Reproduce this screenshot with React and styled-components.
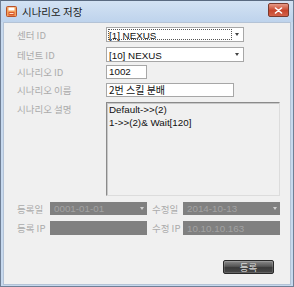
import React from "react";
import styled, { createGlobalStyle } from "styled-components";

const GlobalStyle = createGlobalStyle`
  html, body {
    margin: 0;
    padding: 0;
    background: #ffffff;
  }
  body {
    font-family: "Liberation Sans", "Noto Sans CJK KR", sans-serif;
  }
`;

const KR = `"Noto Sans CJK KR", "Liberation Sans", sans-serif`;
const LATIN = `"Liberation Sans", "Noto Sans CJK KR", sans-serif`;

/* Window frame */
const Window = styled.div`
  width: 294px;
  height: 287px;
  box-sizing: border-box;
  display: flex;
  flex-direction: column;
  border: 1px solid #6f7f95;
  border-top-color: #5a6a80;
  background: #c7d9ee;
  overflow: hidden;
`;

const TitleBar = styled.div`
  height: 21px;
  flex: none;
  display: flex;
  align-items: center;
  padding: 0 4px 0 5px;
  background: linear-gradient(#d3e2f3, #bed3ec);
`;

const Title = styled.span`
  flex: 1;
  margin-left: 5px;
  font-family: ${KR};
  font-size: 10.5px;
  color: #1a1a1a;
`;

const CloseButton = styled.div`
  width: 19px;
  height: 12px;
  margin-top: -3px;
  border: 1px solid #7a3a2e;
  border-radius: 2px;
  background: linear-gradient(#e69a86, #c7452c 55%, #d4634a);
  display: flex;
  align-items: center;
  justify-content: center;
`;

const Body = styled.div`
  flex: 1;
  margin: 0 2px 1px 2px;
  border: 1px solid #b4c3d6;
  background: #f0f0f0;
  padding: 3px 0 0 13px;
  display: flex;
  flex-direction: column;
`;

/* Form rows */
const Row = styled.div`
  display: grid;
  grid-template-columns: 89px 1fr;
  align-items: ${(p) => (p.$top ? "start" : "center")};
  margin-top: ${(p) => p.$mt}px;
`;

const Label = styled.span`
  font-family: ${KR};
  font-size: 9.5px;
  color: #ababab;
  line-height: 12px;
  white-space: nowrap;
  padding-top: ${(p) => p.$pt || 0}px;
  padding-left: ${(p) => p.$pl || 0}px;
`;

const Combo = styled.div`
  width: ${(p) => p.$w}px;
  height: 15px;
  box-sizing: border-box;
  border: 1px solid #a7a7a7;
  background: #fff;
  display: flex;
  align-items: center;
  padding: 1px;
`;

const ComboText = styled.div`
  flex: 1;
  height: 100%;
  box-sizing: border-box;
  border: 1px ${(p) => (p.$focus ? "dotted #555" : "solid transparent")};
  font-family: ${LATIN};
  font-size: 9.8px;
  line-height: 11px;
  color: #111;
  white-space: nowrap;
`;

const Arrow = styled.div`
  width: 10px;
  display: flex;
  justify-content: center;
  &::after {
    content: "";
    border-left: 2.5px solid transparent;
    border-right: 2.5px solid transparent;
    border-top: 3px solid ${(p) => p.$color || "#444"};
  }
`;

const Input = styled.div`
  width: ${(p) => p.$w}px;
  height: 14px;
  box-sizing: border-box;
  border: 1px solid #a7a7a7;
  background: #fff;
  font-family: ${(p) => (p.$kr ? KR : LATIN)};
  font-size: ${(p) => (p.$kr ? 10 : 9.8)}px;
  line-height: 12px;
  padding-left: 2px;
  color: #111;
  white-space: nowrap;
`;

const TextArea = styled.div`
  width: 174px;
  height: 94px;
  box-sizing: border-box;
  border: 1px solid #8a8a8a;
  border-right-color: #dcdcdc;
  border-bottom-color: #dcdcdc;
  box-shadow: inset 1px 1px 0 #c8c8c8;
  background: #f0f0f0;
  font-family: ${LATIN};
  font-size: 9.8px;
  line-height: 12.5px;
  padding: 1px 2px;
  color: #111;
  white-space: pre;
`;

/* Bottom info grid */
const InfoRow = styled.div`
  display: grid;
  grid-template-columns: 33px 97px 36px 97px;
  align-items: center;
  margin-top: ${(p) => p.$mt}px;
`;

const DarkBox = styled.div`
  height: ${(p) => p.$h}px;
  box-sizing: border-box;
  background: #808080;
  display: flex;
  align-items: center;
  padding-left: 4px;
  font-family: ${LATIN};
  font-size: 9.8px;
  color: #a3a3a3;
  white-space: nowrap;
`;

const DarkText = styled.span`
  flex: 1;
`;

const Footer = styled.div`
  display: flex;
  justify-content: flex-end;
  padding-right: 16px;
  margin-top: 25px;
`;

const Button = styled.div`
  width: 51px;
  height: 14px;
  box-sizing: border-box;
  border: 1px solid #2a2a2a;
  border-radius: 2px;
  background: linear-gradient(#8a8a8a, #555 45%, #3a3a3a 55%, #4a4a4a);
  box-shadow: inset 0 0 0 1px rgba(255, 255, 255, 0.15);
  display: flex;
  align-items: center;
  justify-content: center;
  font-family: ${KR};
  font-size: 9.5px;
  color: #d8d8d8;
`;

function WindowIcon() {
  return (
    <svg width="11" height="11" viewBox="0 0 11 11">
      <rect x="0.5" y="0.5" width="10" height="10" rx="1" fill="#f2a15c" stroke="#b8502a" />
      <rect x="2.5" y="1.5" width="6" height="3" fill="#ffffff" />
      <rect x="2.5" y="6" width="6" height="3.5" fill="#d9582e" />
      <rect x="3.5" y="7" width="4" height="1" fill="#fde0c8" />
    </svg>
  );
}

function CloseIcon() {
  return (
    <svg width="9" height="7" viewBox="0 0 9 7">
      <path d="M1.5 1 L7.5 6 M7.5 1 L1.5 6" stroke="#ffffff" strokeWidth="1.6" strokeLinecap="round" />
    </svg>
  );
}

const description = "Default->>(2)\n1->>(2)& Wait[120]";

export default function App() {
  return (
    <>
      <GlobalStyle />
      <Window>
        <TitleBar>
          <WindowIcon />
          <Title>시나리오 저장</Title>
          <CloseButton>
            <CloseIcon />
          </CloseButton>
        </TitleBar>
        <Body>
          <Row $mt={1}>
            <Label>센터 ID</Label>
            <Combo $w={138}>
              <ComboText $focus>[1] NEXUS</ComboText>
              <Arrow />
            </Combo>
          </Row>
          <Row $mt={5}>
            <Label>테넌트 ID</Label>
            <Combo $w={138}>
              <ComboText>[10] NEXUS</ComboText>
              <Arrow />
            </Combo>
          </Row>
          <Row $mt={3}>
            <Label>시나리오 ID</Label>
            <Input $w={41}>1002</Input>
          </Row>
          <Row $mt={4}>
            <Label>시나리오 이름</Label>
            <Input $w={128} $kr>
              2번 스킬 분배
            </Input>
          </Row>
          <Row $mt={5} $top>
            <Label $pt={1}>시나리오 설명</Label>
            <TextArea>{description}</TextArea>
          </Row>
          <InfoRow $mt={6}>
            <Label>등록일</Label>
            <DarkBox $h={13}>
              <DarkText>0001-01-01</DarkText>
              <Arrow $color="#d0d0d0" />
            </DarkBox>
            <Label $pl={5}>수정일</Label>
            <DarkBox $h={13}>
              <DarkText>2014-10-13</DarkText>
              <Arrow $color="#d0d0d0" />
            </DarkBox>
          </InfoRow>
          <InfoRow $mt={6}>
            <Label>등록 IP</Label>
            <DarkBox $h={14} />
            <Label $pl={5}>수정 IP</Label>
            <DarkBox $h={14}>
              <DarkText>10.10.10.163</DarkText>
            </DarkBox>
          </InfoRow>
          <Footer>
            <Button>등록</Button>
          </Footer>
        </Body>
      </Window>
    </>
  );
}
